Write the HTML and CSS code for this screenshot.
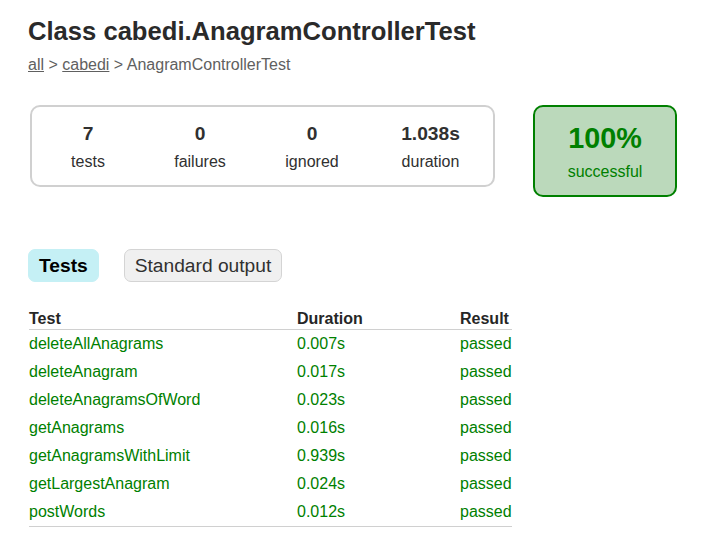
FILE: index.html
```html
<!DOCTYPE html>
<html>
<head>
<meta charset="utf-8">
<title>Test results - Class cabedi.AnagramControllerTest</title>
<link rel="stylesheet" href="styles.css">
</head>
<body>
<div class="content">
  <h1 class="title">Class cabedi.AnagramControllerTest</h1>
  <div class="breadcrumbs"><a href="#">all</a> &gt; <a href="#">cabedi</a> &gt; AnagramControllerTest</div>

  <div class="summary">
    <div class="summary-group">
      <div class="info-box">
        <p class="counter">7</p>
        <p class="label">tests</p>
      </div>
      <div class="info-box">
        <p class="counter">0</p>
        <p class="label">failures</p>
      </div>
      <div class="info-box">
        <p class="counter">0</p>
        <p class="label">ignored</p>
      </div>
      <div class="info-box info-box-wide">
        <p class="counter">1.038s</p>
        <p class="label">duration</p>
      </div>
    </div>
    <div class="success-rate">
      <p class="percent">100%</p>
      <p class="label">successful</p>
    </div>
  </div>

  <ul class="tab-links">
    <li class="tab selected"><a href="#">Tests</a></li>
    <li class="tab"><a href="#">Standard output</a></li>
  </ul>

  <table class="test-table">
    <thead>
      <tr>
        <th class="col-test">Test</th>
        <th class="col-duration">Duration</th>
        <th class="col-result">Result</th>
      </tr>
    </thead>
    <tbody>
      <tr><td>deleteAllAnagrams</td><td>0.007s</td><td>passed</td></tr>
      <tr><td>deleteAnagram</td><td>0.017s</td><td>passed</td></tr>
      <tr><td>deleteAnagramsOfWord</td><td>0.023s</td><td>passed</td></tr>
      <tr><td>getAnagrams</td><td>0.016s</td><td>passed</td></tr>
      <tr><td>getAnagramsWithLimit</td><td>0.939s</td><td>passed</td></tr>
      <tr><td>getLargestAnagram</td><td>0.024s</td><td>passed</td></tr>
      <tr><td>postWords</td><td>0.012s</td><td>passed</td></tr>
    </tbody>
  </table>
</div>
</body>
</html>
```

FILE: styles.css
```css
html, body {
  margin: 0;
  padding: 0;
  background: #ffffff;
}

body {
  font-family: "Liberation Sans", Arial, sans-serif;
  font-size: 16px;
  color: #303030;
}

.content {
  padding: 16px 28px 0 28px;
}

.title {
  margin: 0;
  font-size: 25.6px;
  font-weight: bold;
  line-height: 30px;
  color: #2a2a2a;
}

.breadcrumbs {
  margin-top: 10px;
  line-height: 18px;
  color: #606060;
}

.breadcrumbs a {
  color: #606060;
  text-decoration: underline;
}

.summary {
  display: flex;
  align-items: flex-start;
  margin-top: 31px;
}

.summary-group {
  display: flex;
  margin-left: 2px;
  border: 2px solid #d0d0d0;
  border-radius: 10px;
}

.info-box {
  width: 112px;
  padding: 16px 0 14px;
  text-align: center;
}

.info-box-wide {
  width: 125px;
}

.info-box p,
.success-rate p {
  margin: 0;
}

.counter {
  font-size: 19.2px;
  font-weight: bold;
  line-height: 22px;
  margin-bottom: 8px !important;
}

.label {
  line-height: 18px;
}

.success-rate {
  width: 140px;
  margin-left: 38px;
  padding: 15px 0 14px;
  text-align: center;
  border: 2px solid #008000;
  border-radius: 10px;
  background-color: #bbd9bb;
  color: #008000;
}

.percent {
  font-size: 28.8px;
  font-weight: bold;
  line-height: 33px;
  margin-bottom: 8px !important;
}

.tab-links {
  display: flex;
  list-style: none;
  margin: 52px 0 0 0;
  padding: 0;
}

.tab {
  padding: 5px 10px;
  margin-right: 25px;
  border: 1px solid #d4d4d4;
  border-radius: 7px;
  background-color: #f0f0f0;
}

.tab a {
  display: block;
  font-size: 19.2px;
  line-height: 21px;
  color: #303030;
  text-decoration: none;
}

.tab.selected {
  background-color: #c5f0f5;
  border-color: #c5f0f5;
}

.tab.selected a {
  color: #000000;
  font-weight: bold;
}

.test-table {
  margin-top: 21px;
  margin-left: 1px;
  border-collapse: collapse;
  border-spacing: 0;
}

.test-table th {
  text-align: left;
  font-weight: bold;
  line-height: 18px;
  padding: 7px 0 1px 0;
  border-bottom: 1px solid #d0d0d0;
  color: #262626;
}

.test-table td {
  line-height: 18px;
  padding: 5px 0 5px 0;
  color: #008000;
}

.test-table tbody tr:last-child td {
  border-bottom: 1px solid #d0d0d0;
}

.col-test {
  width: 268px;
}

.col-duration {
  width: 163px;
}
```
